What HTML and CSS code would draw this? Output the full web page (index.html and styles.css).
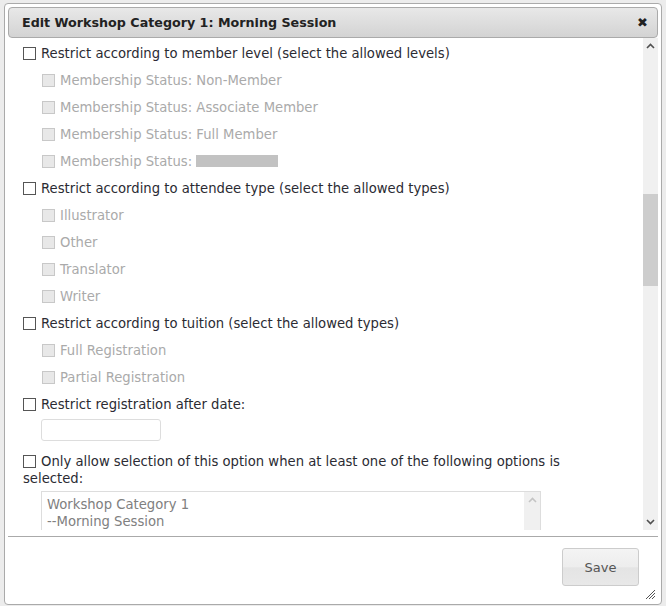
FILE: index.html
```html
<!DOCTYPE html>
<html>
<head>
<meta charset="utf-8">
<link rel="stylesheet" href="styles.css">
</head>
<body>
<div class="dialog">
  <div class="titlebar">
    <span class="title">Edit Workshop Category 1: Morning Session</span>
    <span class="close">&#x2716;</span>
  </div>
  <div class="scroller">
    <div class="content">
      <div class="row"><span class="cb"></span>Restrict according to member level (select the allowed levels)</div>
      <div class="row sub"><span class="cb dis"></span>Membership Status: Non-Member</div>
      <div class="row sub"><span class="cb dis"></span>Membership Status: Associate Member</div>
      <div class="row sub"><span class="cb dis"></span>Membership Status: Full Member</div>
      <div class="row sub"><span class="cb dis"></span>Membership Status: <span class="redact"></span></div>
      <div class="row"><span class="cb"></span>Restrict according to attendee type (select the allowed types)</div>
      <div class="row sub"><span class="cb dis"></span>Illustrator</div>
      <div class="row sub"><span class="cb dis"></span>Other</div>
      <div class="row sub"><span class="cb dis"></span>Translator</div>
      <div class="row sub"><span class="cb dis"></span>Writer</div>
      <div class="row"><span class="cb"></span>Restrict according to tuition (select the allowed types)</div>
      <div class="row sub"><span class="cb dis"></span>Full Registration</div>
      <div class="row sub"><span class="cb dis"></span>Partial Registration</div>
      <div class="row"><span class="cb"></span>Restrict registration after date:</div>
      <div class="dateinput"></div>
      <div class="row wrap"><span class="cb"></span>Only allow selection of this option when at least one of the following options is selected:</div>
      <div class="listbox">
        <div class="options">
          <div class="opt">Workshop Category 1</div>
          <div class="opt">--Morning Session</div>
        </div>
        <div class="lscroll">
          <svg width="9" height="6" viewBox="0 0 9 6"><polyline points="1,5 4.5,1.5 8,5" fill="none" stroke="#c4c4c4" stroke-width="1.6"/></svg>
        </div>
      </div>
    </div>
    <div class="vscroll">
      <div class="arrow">
        <svg width="9" height="6" viewBox="0 0 9 6"><polyline points="1,5 4.5,1.5 8,5" fill="none" stroke="#505050" stroke-width="1.6"/></svg>
      </div>
      <div class="track"><div class="thumb"></div></div>
      <div class="arrow">
        <svg width="9" height="6" viewBox="0 0 9 6"><polyline points="1,1 4.5,4.5 8,1" fill="none" stroke="#505050" stroke-width="1.6"/></svg>
      </div>
    </div>
  </div>
  <div class="footer">
    <button class="save">Save</button>
    <svg class="grip" width="11" height="11" viewBox="0 0 11 11">
      <line x1="10" y1="1" x2="1" y2="10" stroke="#555" stroke-width="1"/>
      <line x1="10" y1="4" x2="4" y2="10" stroke="#555" stroke-width="1"/>
      <line x1="10" y1="7" x2="7" y2="10" stroke="#555" stroke-width="1"/>
    </svg>
  </div>
</div>
</body>
</html>
```

FILE: styles.css
```css
html, body {
  margin: 0;
  padding: 0;
}
body {
  background: #ececec;
  padding: 3px 4px;
  font-family: "DejaVu Sans", Verdana, sans-serif;
  font-size: 13.2px;
  color: #2b2b33;
}
.dialog {
  width: 658px;
  height: 602px;
  box-sizing: border-box;
  border: 1px solid #aaa;
  border-radius: 4px;
  background: #fff;
  padding: 3px;
  display: flex;
  flex-direction: column;
}
.titlebar {
  height: 31px;
  box-sizing: border-box;
  border: 1px solid #aaa;
  border-radius: 4px;
  background: linear-gradient(#e8e8e8, #d3d3d3);
  display: flex;
  align-items: center;
  justify-content: space-between;
  padding: 0 9px 0 13px;
  flex: none;
}
.title {
  font-weight: bold;
  font-size: 12.7px;
  color: #222;
}
.close {
  font-size: 13px;
  color: #222;
}
.scroller {
  height: 492px;
  display: flex;
  flex: none;
  border-bottom: 1px solid #aaa;
  padding-bottom: 6px;
  box-sizing: content-box;
}
.content {
  flex: 1;
  overflow: hidden;
  padding: 2px 40px 0 15px;
}
.row {
  line-height: 17px;
  padding: 5px 0;
  white-space: nowrap;
}
.row.sub {
  padding-left: 19px;
  color: #aaa;
}
.row.wrap {
  white-space: normal;
  padding: 0;
  margin-top: 12px;
}
.cb {
  display: inline-block;
  width: 11px;
  height: 11px;
  border: 1px solid #555;
  background: #fff;
  margin-right: 5px;
  vertical-align: -2px;
}
.cb.dis {
  border-color: #c8c8c8;
  background: #e8e8e8;
}
.redact {
  display: inline-block;
  width: 82px;
  height: 12px;
  background: #c2c2c2;
  vertical-align: -1px;
}
.dateinput {
  margin: 1px 0 0 18px;
  width: 120px;
  height: 22px;
  box-sizing: border-box;
  border: 1px solid #ddd;
  border-radius: 3px;
}
.listbox {
  margin: 4px 0 0 18px;
  width: 500px;
  height: 60px;
  box-sizing: border-box;
  border: 1px solid #ddd;
  border-bottom: none;
  display: flex;
}
.options {
  flex: 1;
  padding: 4px 0 0 5px;
  color: #808080;
  line-height: 17px;
}
.lscroll {
  width: 16px;
  background: #f0f0f0;
  display: flex;
  justify-content: center;
  padding-top: 5px;
  box-sizing: border-box;
}
.vscroll {
  width: 15px;
  background: #f0f0f0;
  display: flex;
  flex-direction: column;
}
.arrow {
  height: 16px;
  display: flex;
  align-items: center;
  justify-content: center;
}
.track {
  flex: 1;
  padding-top: 140px;
}
.thumb {
  height: 92px;
  background: #cdcdcd;
}
.footer {
  flex: 1;
  display: flex;
  justify-content: flex-end;
  align-items: flex-start;
  position: relative;
}
.save {
  margin: 11px 19px 0 0;
  width: 77px;
  height: 38px;
  border: 1px solid #ccc;
  border-radius: 3px;
  background: linear-gradient(#f4f4f4 0%, #ededed 50%, #e4e4e4 52%, #e8e8e8 100%);
  font-family: "DejaVu Sans", Verdana, sans-serif;
  font-size: 13px;
  color: #555;
  padding: 0;
}
.grip {
  position: absolute;
  right: 2px;
  bottom: 1px;
}
```
